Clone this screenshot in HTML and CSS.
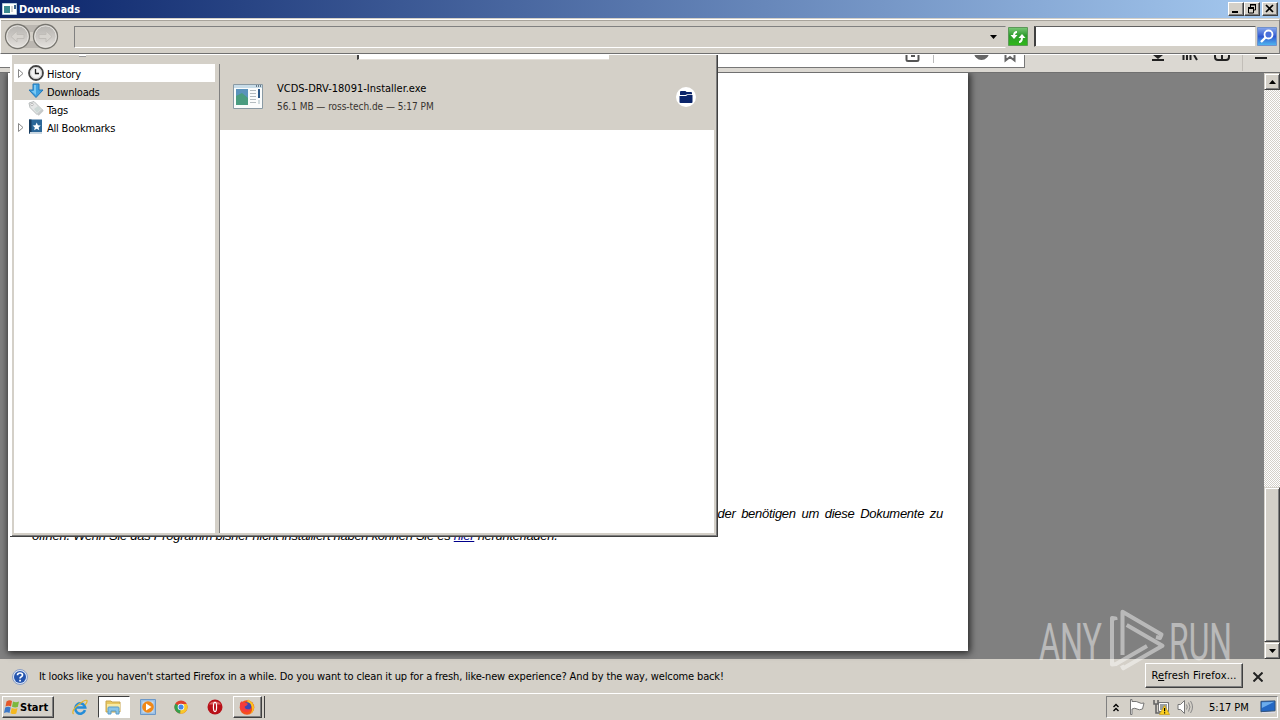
FILE: index.html
```html
<!DOCTYPE html>
<html lang="en">
<head>
    <meta charset="UTF-8">
    <title>Downloads</title>
    <link rel="stylesheet" href="styles.css">
</head>
<body>
    <div class="desktop">
        <div class="firefox">
            <div class="nav-bar">
                <div class="url-bar">
                    <svg width="310" height="12" viewBox="0 0 310 12">
                        <path d="M189.500 0V4.500q0 1.500 1.500 1.500h9q1.500 0 1.500-1.500V0M194 1h4" fill="none" stroke="#555" stroke-width="2"/>
                        <path d="M216.500 0V8" stroke="#bbb"/>
                        <circle cx="264.500" cy="-2.500" r="7.500" fill="#666"/>
                        <path d="M288.500 0V5.500L293 2l4.500 3.500V0" fill="none" stroke="#666" stroke-width="2"/>
                    </svg>
                </div>
                <svg class="nav-icons" width="150" height="18" viewBox="0 0 150 18">
                    <g fill="none" stroke="#222" stroke-width="2">
                        <path d="M22 5h12"/>
                        <path d="M53.500 0V5M57 0v5M60.500 0v5M64 0l3 5"/>
                        <path d="M85 0v2q0 3 3 3h8q3 0 3-3V0M92 0v5"/>
                        <path d="M125 3h12"/>
                    </g>
                    <path d="M23 0h10l-5 4z" fill="#222"/>
                    <path d="M112.500 0v16" stroke="#c2beb8"/>
                </svg>
            </div>
            <div class="viewport">
                <div class="page">
                    <p class="line-right">der benötigen um diese Dokumente zu</p>
                    <p class="line-left">öffnen. Wenn Sie das Programm bisher nicht installiert haben können Sie es <a href="#">hier</a> herunterladen.</p>
                </div>
                <div class="scrollbar">
                    <div class="scroll-btn"><svg width="7" height="4"><path d="M3.500 0L7 4H0z"/></svg></div>
                    <div class="scroll-track"></div>
                    <div class="scroll-thumb"></div>
                    <div class="scroll-btn"><svg width="7" height="4"><path d="M0 0h7L3.500 4z"/></svg></div>
                </div>
            </div>
            <div class="notification">
                <svg width="16" height="16" viewBox="0 0 16 16">
                    <circle cx="8" cy="8" r="7.500" fill="#d8e2f4" stroke="#8a9ec4"/>
                    <circle cx="8" cy="8" r="6" fill="#2454ae"/>
                    <path d="M5.500 6.300q0-2.300 2.500-2.300t2.500 2q0 1.300-1.500 2-1 .5-1 1.500" fill="none" stroke="#fff" stroke-width="1.700"/>
                    <path d="M7.200 10.800h1.700v1.700H7.200z" fill="#fff"/>
                </svg>
                <span class="message">It looks like you haven't started Firefox in a while. Do you want to clean it up for a fresh, like-new experience? And by the way, welcome back!</span>
                <button class="refresh">R<u>e</u>fresh Firefox...</button>
                <svg width="10" height="10" viewBox="0 0 10 10"><path d="M.5.500l9 9M9.500.500l-9 9" stroke="#222" stroke-width="2"/></svg>
            </div>
        </div>

        <div class="library">
            <div class="library-bar">
                <span class="toolbar-stub"></span>
                <span class="library-search"></span>
            </div>
            <div class="library-body">
                <ul class="tree">
                    <li>
                        <svg class="twisty" width="6" height="9"><path d="M.5.5v8l4.500-4z" fill="#fff" stroke="#888"/></svg>
                        <svg width="16" height="16" viewBox="0 0 16 16"><circle cx="8" cy="8" r="7" fill="#f4f4f4" stroke="#444" stroke-width="1.800"/><circle cx="8" cy="8" r="5.500" fill="none" stroke="#ccc"/><path d="M7.500 4v4.500H11" fill="none" stroke="#222" stroke-width="1.300"/></svg>
                        <span>History</span>
                    </li>
                    <li class="selected">
                        <span class="twisty"></span>
                        <svg width="16" height="16" viewBox="0 0 16 16"><path d="M5 1h6v6h4l-7 7.500L1 7h4z" fill="#3da0e0" stroke="#2478b8"/><path d="M6 2h2v10L3.500 8H6z" fill="#7cc8f2"/></svg>
                        <span>Downloads</span>
                    </li>
                    <li>
                        <span class="twisty"></span>
                        <svg width="16" height="16" viewBox="0 0 16 16"><path d="M1 2l5-1.500 8 8L9 13.500l-7-7z" fill="#e4e6e6" stroke="#b8bcbc"/><path d="M10 14l5-5" stroke="#c4c8c8" stroke-width="2"/><path d="M6 8l4-3 3 3-4 4z" fill="#cdd8d6"/><circle cx="4" cy="3.500" r="1.200" fill="#fff" stroke="#999" stroke-width=".6"/></svg>
                        <span class="tags">Tags</span>
                    </li>
                    <li>
                        <svg class="twisty" width="6" height="9"><path d="M.5.5v8l4.500-4z" fill="#fff" stroke="#888"/></svg>
                        <svg width="16" height="16" viewBox="0 0 16 16"><path d="M1 .5h13v14H1z" fill="#2c6798"/><path d="M1 .5h2.500v14H1z" fill="#173c60"/><path d="M2 13h12v2H2z" fill="#cbd8e2"/><path d="M8.700 3.500l1.200 2.700 2.900.3-2.200 1.900.7 2.900-2.600-1.500-2.600 1.500.7-2.900-2.200-1.900 2.900-.3z" fill="#fff"/></svg>
                        <span class="bookmarks">All Bookmarks</span>
                    </li>
                </ul>
                <div class="downloads">
                    <div class="download">
                        <svg width="30" height="26" viewBox="0 0 30 26">
                            <path d="M.5.500h29v24H.5z" fill="#fafcfc" stroke="#8a9aa4"/>
                            <path d="M1 1h28v3H1z" fill="#c8dce8"/><path d="M23 2h1M25 2h1M27 2h1" stroke="#456" stroke-width="1.500"/>
                            <path d="M3 5h12v16H3z" fill="#5b93bc"/><path d="M3 12l6-3 6 5v7H3z" fill="#4a9c80"/>
                            <path d="M17 6.500h6M17 9.500h6M17 12.500h6M17 15.500h6M17 18.500h6" stroke="#b4bcc0"/>
                            <path d="M25 5h2v9h-2z" fill="#2d5988"/><path d="M25 16h2v4h-2z" fill="#d0dce0"/>
                        </svg>
                        <div class="download-info">
                            <div class="file">VCDS-DRV-18091-Installer.exe</div>
                            <div class="details">56.1 MB — ross-tech.de — 5:17 PM</div>
                        </div>
                        <svg width="20" height="20" viewBox="0 0 20 20">
                            <circle cx="10" cy="10" r="10" fill="#fff"/>
                            <path d="M4 5q0-1 1-1h4q1 0 1.500 1H15q1 0 1 1v1.200h-5L9.500 8H4zM3.500 9H10l1.500-1h5v7q0 1-1 1h-11q-1 0-1-1z" fill="#0a246a"/>
                        </svg>
                    </div>
                </div>
            </div>
        </div>

        <div class="explorer">
            <div class="title-bar">
                <svg width="15" height="12" viewBox="0 0 15 12"><path d="M.5.500h14v11H.5z" fill="#fff" stroke="#b4cadc"/><path d="M2 3h6v7H2z" fill="#3c8a90"/><path d="M9 4h2M9 6h2M9 8h2" stroke="#aaa"/><path d="M12 2h2v4h-2z" fill="#38608c"/></svg>
                <span class="title">Downloads</span>
                <div class="caption-buttons">
                    <span class="caption"><svg width="14" height="12"><path d="M3 8h6v2H3z"/></svg></span>
                    <span class="caption"><svg width="14" height="12"><path d="M5 1.500h6M5.500 2v2M10.500 2v5H9M3 4.500h6M3.500 5v5h5V5" fill="none" stroke="#000"/><path d="M5 1h6v1.500H5zM3 4h6v2H3z"/></svg></span>
                    <span class="caption close"><svg width="14" height="12"><path d="M3 2l7 7M10 2L3 9" stroke="#000" stroke-width="1.700"/></svg></span>
                </div>
            </div>
            <div class="address-row">
                <svg class="travel" width="56" height="27" viewBox="0 0 56 27">
                    <defs><linearGradient id="btn" x2="0" y2="1"><stop stop-color="#b4b2ae"/><stop offset=".5" stop-color="#cbc8c4"/><stop offset="1" stop-color="#e6e3df"/></linearGradient></defs>
                    <path d="M14 2h28l-9 7H23zM14 25h28l-9-7H23z" fill="#bbb7b1"/>
                    <circle cx="13.500" cy="13.500" r="12" fill="url(#btn)" stroke="#77756f" stroke-width="1.300"/>
                    <circle cx="41.500" cy="13.500" r="12" fill="url(#btn)" stroke="#77756f" stroke-width="1.300"/>
                    <circle cx="13.500" cy="13.500" r="10.700" fill="none" stroke="#e8e6e2"/>
                    <circle cx="41.500" cy="13.500" r="10.700" fill="none" stroke="#e8e6e2"/>
                    <path d="M7 13.500l6-5.500v3.500h7v4h-7V19zM48 13.500L42 8v3.500h-7v4h7V19z" fill="#d6d3ce" stroke="#c0bdb8"/>
                </svg>
                <div class="address"><svg width="7" height="4"><path d="M0 0h7L3.500 4z"/></svg></div>
                <svg class="refresh-icon" width="20" height="19" viewBox="0 0 20 19">
                    <defs><linearGradient id="green" x2="0" y2="1"><stop stop-color="#7cc878"/><stop offset=".45" stop-color="#2c9c2c"/><stop offset="1" stop-color="#30b818"/></linearGradient></defs>
                    <path d="M.5.500h19v18H.5z" fill="url(#green)" stroke="#5c9858"/>
                    <path d="M9 5q-3 0-3 4" fill="none" stroke="#fff" stroke-width="2"/><path d="M2.500 8h7L6 12z" fill="#fff"/>
                    <path d="M11 15q3 0 3-5" fill="none" stroke="#fff" stroke-width="2"/><path d="M10.500 11h7L14 7z" fill="#fff"/>
                </svg>
                <div class="search"></div>
                <svg width="20" height="19" viewBox="0 0 20 19">
                    <defs><linearGradient id="blue" x2="0" y2="1"><stop stop-color="#88a8ec"/><stop offset=".5" stop-color="#3058d0"/><stop offset="1" stop-color="#50b8f0"/></linearGradient></defs>
                    <path d="M.5.500h19v18H.5z" fill="url(#blue)" stroke="#7090cc"/>
                    <circle cx="11.500" cy="7.500" r="4" fill="#4a70dc" stroke="#fff" stroke-width="1.800"/><path d="M8.500 10.500L4 15" stroke="#fff" stroke-width="2.400"/>
                </svg>
            </div>
        </div>

        <div class="taskbar">
            <button class="start">
                <svg width="16" height="16" viewBox="0 0 16 16">
                    <path d="M2.500 2.500q3-2 5.500-.5L7 7.500q-2.500-1.500-5.500 0z" fill="#e4582a"/>
                    <path d="M9 2.500q3 1.500 6 0L13.800 8Q11 9 8 7.700z" fill="#7cb83c"/>
                    <path d="M1.200 8.500q3-1.500 5.500 0L5.500 14q-2.500-1.500-5.500 0z" fill="#3c78c8"/>
                    <path d="M7.700 8.900q3 1.400 5.800.3L12.300 14.500q-2.800 1.300-5.800-.3z" fill="#f4b820"/>
                </svg>
                <span>Start</span>
            </button>
            <div class="launch">
                <span class="task"><svg width="16" height="16" viewBox="0 0 16 16"><path d="M13 11.200A5 5.200 0 1 1 13.200 8.500H4.500" fill="none" stroke="#248cd8" stroke-width="2.600"/><path d="M1.500 15Q-1 12 6 6T15 1.500Q15.500 3.500 13 6" fill="none" stroke="#e4b428" stroke-width="1.200"/></svg></span>
                <span class="task pressed"><svg width="17" height="16" viewBox="0 0 17 16"><path d="M1 2h5l1 1h8v10H1z" fill="#e8c860" stroke="#c8a44c"/><path d="M2 5h13v7H2z" fill="#f8eaa4"/><path d="M3 15V9q0-1 1-1h9q1 0 1 1v6h-3v-3H6v3z" fill="#88c4e8" stroke="#5a9cc8"/></svg></span>
                <span class="task"><svg width="16" height="16" viewBox="0 0 16 16"><path d="M.5.500h15v15H.5z" fill="#9cc0e4" stroke="#6c98c8"/><path d="M2.500 2.500h11v11h-11z" fill="#c8dcf0"/><circle cx="8" cy="8" r="5.800" fill="#f08818"/><path d="M6 4.500v7L11.500 8z" fill="#fff"/></svg></span>
                <span class="task"><svg width="14" height="14" viewBox="0 0 16 16"><circle cx="8" cy="8" r="7.500" fill="#e0402c"/><path d="M8 8L1.500 4.200A7.500 7.500 0 0 0 7.500 15.500z" fill="#34a04c"/><path d="M8 8h7.500A7.500 7.500 0 0 1 7 15.500z" fill="#f8c828"/><path d="M8 8V4.500h6.600A7.500 7.500 0 0 1 15.500 8l-4 3z" fill="#f8c828"/><circle cx="8" cy="8" r="3.800" fill="#fff"/><circle cx="8" cy="8" r="2.900" fill="#4688e8"/></svg></span>
                <span class="task"><svg width="16" height="16" viewBox="0 0 16 16"><circle cx="8" cy="8" r="7.500" fill="#b81018"/><path d="M2 5.500a6.500 5 0 0 1 12 0z" fill="#dc6464"/><ellipse cx="8" cy="8" rx="2.200" ry="5.200" fill="#fff"/><ellipse cx="8" cy="8" rx="1" ry="4" fill="#b81018"/></svg></span>
                <span class="task raised"><svg width="16" height="16" viewBox="0 0 16 16"><circle cx="8" cy="8.500" r="7.300" fill="#f4501c"/><path d="M9 .5q6 3 6 8t-5 7q4-3 3-7t-5-5z" fill="#fcc420"/><circle cx="8" cy="7.500" r="4.200" fill="#3c48b4"/><path d="M1 4l2-2 1 2q3-1 5 1L7 7q-2 0-1 2t5 1q-1 4-5 3T1 8z" fill="#f43c3c"/></svg></span>
                <span class="stack"></span>
            </div>
            <div class="tray">
                <svg class="chevron" width="6" height="9"><path d="M.5 4L3 1.500 5.500 4M.5 8L3 5.500 5.500 8" fill="none" stroke="#000" stroke-width="1.400"/></svg>
                <svg class="flag" width="16" height="16" viewBox="0 0 16 16"><path d="M1.500.5v15h1.500V10q3-1.500 5 0t5.500 0l1.500-6q-3 1-5-.5T3 2.500v-2z" fill="#fff" stroke="#777"/></svg>
                <svg class="network" width="17" height="16" viewBox="0 0 17 16"><path d="M5.500 3.500h10v9h-10z" fill="#9aa0a4" stroke="#777"/><path d="M6.500 4.500h8v7h-8z" fill="none" stroke="#fff"/><path d="M1 1v4h4V1M3 5v9h4" fill="none" stroke="#666" stroke-width="1.600"/><path d="M11.500 6.500l5 9h-10z" fill="#fcd020" stroke="#c89c10" stroke-width=".7"/><path d="M11 9h1.200v3.200H11zM11 13.200h1.200v1.300H11z"/></svg>
                <svg class="volume" width="17" height="16" viewBox="0 0 17 16"><path d="M1 5.500h2.500L7.500 1.500v13l-4-4H1z" fill="#fff" stroke="#777"/><path d="M9.500 5.500q1.500 2.500 0 5M11.500 3.500q3 4.500 0 9M13.500 2q4 6 0 12" fill="none" stroke="#888"/></svg>
                <span class="clock">5:17 PM</span>
                <svg width="16" height="14" viewBox="0 0 17 14"><path d="M1 1l15-.5V11L1 12z" fill="#2468c4" stroke="#305078"/><path d="M2 2l13-.5L2 8z" fill="#6cacec"/><path d="M2 12.500h14v1H2z" fill="#dde"/></svg>
            </div>
        </div>

        <svg class="watermark" width="210" height="76" viewBox="0 0 210 76">
            <g class="mark-text">
                <text x="9" y="53" textLength="63" lengthAdjust="spacingAndGlyphs">ANY</text>
                <text x="139" y="53" textLength="63" lengthAdjust="spacingAndGlyphs">RUN</text>
            </g>
            <path d="M85.500 13v-1.500l-3.500-.5V57.500l4-.5 31-18M92.500 48V4.700L131.500 27.500l-1.500 3.500-4-1M96.700 18L132.500 38.700 93.300 61.300l-1.500-3"/>
        </svg>
    </div>
</body>
</html>
```
FILE: styles.css
```css
body {
    margin: 0;
    overflow: hidden;
    font-family: "DejaVu Sans Condensed", "DejaVu Sans", sans-serif;
    font-size: 11px;
    color: #000;
}
svg {
    display: block;
    flex-shrink: 0;
}
.desktop {
    position: relative;
    width: 1280px;
    height: 720px;
    overflow: hidden;
    background: #d4d0c8;
}

/* browser behind */
.firefox {
    position: absolute;
    left: 0;
    top: 55px;
    width: 1280px;
    height: 639px;
    display: flex;
    flex-direction: column;
}
.nav-bar {
    display: flex;
    height: 17px;
    background: #dbd8d2;
    border-bottom: 1px solid #707070;
}
.url-bar {
    box-sizing: border-box;
    width: 1025px;
    height: 13px;
    padding-left: 717px;
    background: #fff;
    border: solid #777;
    border-width: 0 1px 1px 0;
}
.nav-icons {
    margin-left: 105px;
}
.viewport {
    display: flex;
    height: 586px;
    padding-left: 8px;
    background: #808080;
}
.page {
    box-sizing: border-box;
    width: 960px;
    height: 578px;
    padding: 429px 25px 0 24px;
    background: #fff;
    box-shadow: 1px 1px 7px 1px #222;
    font: italic 13px/23px "Liberation Sans", Arial, sans-serif;
    letter-spacing: -0.28px;
    clip-path: inset(0 -12px -12px -12px);
}
.page p {
    margin: 0;
    white-space: nowrap;
}
.line-right {
    text-align: right;
    word-spacing: 2.4px;
}
.page .line-left {
    line-height: 21px;
}
.page a {
    color: #00008b;
}
.scrollbar {
    display: flex;
    flex-direction: column;
    width: 16px;
    margin-left: auto;
}
.scroll-btn, .scroll-thumb {
    box-sizing: border-box;
    background: #d4d0c8;
    border: 1px solid;
    border-color: #d4d0c8 #404040 #404040 #d4d0c8;
    box-shadow: inset 1px 1px #fff, inset -1px -1px #808080;
}
.scroll-btn {
    display: flex;
    align-items: center;
    justify-content: center;
    height: 17px;
}
.scroll-track {
    height: 397px;
    background: repeating-conic-gradient(#fff 0 25%, #d4d0c8 0 50%) 0 0 / 2px 2px;
}
.scroll-thumb {
    flex: 1;
}
.notification {
    display: flex;
    align-items: center;
    height: 35px;
    padding: 0 17px 0 12px;
    background: #d4d0c8;
}
.message {
    margin-left: 11px;
    letter-spacing: -0.14px;
    white-space: nowrap;
}
.refresh {
    width: 98px;
    height: 25px;
    margin: 0 10px 2px auto;
    padding: 0 0 1px 0;
    letter-spacing: 0.14px;
    white-space: nowrap;
}
button {
    font: inherit;
    color: #000;
    background: #d4d0c8;
    border: 1px solid;
    border-color: #fff #404040 #404040 #fff;
    box-shadow: inset -1px -1px #808080;
}

/* library window */
.library {
    position: absolute;
    box-sizing: border-box;
    left: 10px;
    top: 55px;
    width: 708px;
    height: 482px;
    display: flex;
    flex-direction: column;
    padding: 0 3px 3px 4px;
    background: #d4d0c8;
    border: solid #404040;
    border-width: 0 1px 1px 0;
    box-shadow: inset 2px 0 #fff, inset -1px -1px #808080;
}
.library-bar {
    display: flex;
    align-items: flex-start;
    height: 9px;
}
.toolbar-stub {
    width: 7px;
    height: 1px;
    margin-left: 65px;
    background: #fff;
    border-bottom: 1px solid #999;
}
.library-search {
    width: 250px;
    height: 4px;
    margin-left: 271px;
    background: #fff;
    border-left: 2px solid #404040;
    border-bottom: 1px solid #e4e0da;
}
.library-body {
    display: flex;
    flex: 1;
}
.tree {
    width: 201px;
    margin: 0;
    padding: 0;
    list-style: none;
    background: #fff;
}
.tree li {
    display: flex;
    align-items: center;
    height: 18px;
    padding-left: 4px;
}
.tree li > span:last-child {
    margin-left: 3px;
    padding-top: 2px;
    letter-spacing: -0.2px;
}
.tree li > .tags {
    letter-spacing: 0.3px;
}
.tree li > .bookmarks {
    letter-spacing: -0.45px;
}
.tree .selected {
    background: #d4d0c8;
}
.twisty {
    width: 6px;
    margin-right: 4px;
}
.downloads {
    flex: 1;
    margin-left: 4px;
    border-left: 1px solid #808080;
    background: #fff;
}
.download {
    display: flex;
    align-items: center;
    height: 66px;
    padding: 0 18px 0 13px;
    background: #d4d0c8;
}
.download-info {
    flex: 1;
    margin-left: 14px;
}
.file {
    padding-top: 1px;
    line-height: 18px;
}
.details {
    line-height: 18px;
    font-size: 10px;
    letter-spacing: -0.04px;
    color: #383430;
}

/* explorer window on top */
.explorer {
    position: absolute;
    left: 0;
    top: 0;
    width: 1280px;
    height: 55px;
    background: #d4d0c8;
}
.title-bar {
    display: flex;
    align-items: center;
    height: 18px;
    padding: 0 2px;
    background: linear-gradient(90deg, #0a246a, #a6caf0);
}
.title {
    margin-left: 2px;
    color: #fff;
    font-weight: bold;
}
.caption-buttons {
    display: flex;
    margin-left: auto;
}
.caption {
    box-sizing: border-box;
    width: 16px;
    height: 14px;
    background: #d4d0c8;
    border: 1px solid;
    border-color: #fff #404040 #404040 #fff;
    box-shadow: inset -1px -1px #808080;
}
.close {
    margin-left: 2px;
}
.address-row {
    box-sizing: border-box;
    display: flex;
    align-items: center;
    height: 35px;
    margin-top: 1px;
    padding: 0 2px 0 3px;
    border: 1px solid #fff;
    border-bottom-color: #707070;
    border-right-color: #808080;
    box-shadow: inset 0 1px #a8a49c, 0 1px #fff;
}
.address {
    box-sizing: border-box;
    display: flex;
    align-items: center;
    justify-content: flex-end;
    width: 932px;
    height: 22px;
    margin-left: 14px;
    padding-right: 8px;
    border: 1px solid;
    border-color: #808080 #d4d0c8 #fff #808080;
}
.refresh-icon {
    margin-left: 2px;
}
.search {
    box-sizing: border-box;
    width: 222px;
    height: 21px;
    margin: 0 1px 0 6px;
    background: #fff;
    border: 1px solid;
    border-color: #606060 #d4d0c8 #d4d0c8 #404040;
    box-shadow: inset 1px 0 #404040;
}

/* taskbar */
.taskbar {
    position: absolute;
    box-sizing: border-box;
    left: 0;
    top: 693px;
    width: 1280px;
    height: 27px;
    display: flex;
    align-items: center;
    padding: 0 2px;
    background: #d4d0c8;
    border-top: 1px solid #fff;
}
.start {
    display: flex;
    align-items: center;
    width: 52px;
    height: 22px;
    padding: 0 1px;
    font-weight: bold;
}
.launch {
    display: flex;
    margin-left: 10px;
}
.task {
    box-sizing: border-box;
    display: flex;
    align-items: center;
    justify-content: center;
    width: 32px;
    height: 22px;
    margin-right: 1.800px;
}
.pressed {
    background: #fff;
    border: 1px solid;
    border-color: #404040 #fff #fff #404040;
}
.raised {
    width: 29px;
    margin-right: 0;
    border: 1px solid;
    border-color: #fff #404040 #404040 #fff;
    box-shadow: inset -1px -1px #808080;
}
.stack {
    width: 2px;
    border-right: 1px solid #404040;
}
.tray {
    box-sizing: border-box;
    display: flex;
    align-items: center;
    width: 172px;
    height: 22px;
    margin-left: auto;
    padding: 0 0 0 6px;
    border: 1px solid;
    border-color: #808080 #fff #fff #808080;
}
.flag {
    margin-left: 10px;
}
.network {
    margin-left: 8px;
}
.volume {
    margin-left: 7px;
}
.clock {
    width: 51px;
    margin-left: 15px;
    white-space: nowrap;
}

.watermark {
    position: absolute;
    left: 1030px;
    top: 607px;
    opacity: .45;
    fill: none;
    stroke: #fff;
    stroke-width: 4;
    stroke-linejoin: round;
}
.mark-text {
    fill: #fff;
    stroke: none;
    font: 400 52px Roboto, sans-serif;
}
.refresh {
    position: relative;
}
```
